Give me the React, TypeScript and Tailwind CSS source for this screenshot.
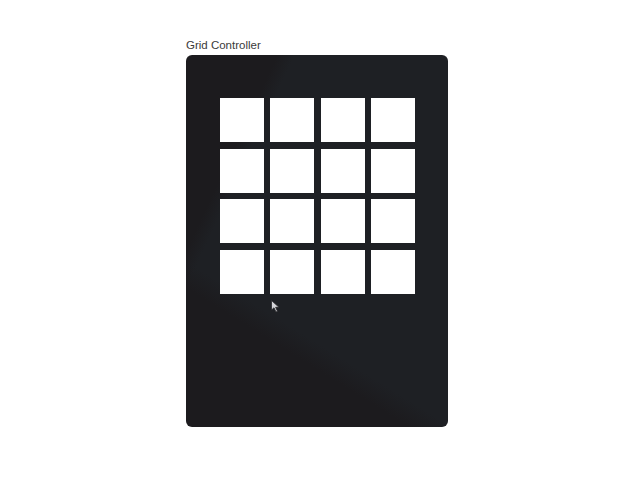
import React from 'react'

const cells = Array.from({ length: 16 }, (_, i) => i)

export default function App(): React.ReactElement {
  return (
    <div className="w-[640px] h-[480px] bg-white flex justify-start pl-[186px] pt-[38px]" style={{ fontFamily: '"Liberation Sans", Arial, sans-serif' }}>
      <div className="flex flex-col">
        <p className="text-[11.5px] leading-[14px] text-[#3a3a3a] mb-[3px]">Grid Controller</p>
        <div className="relative w-[262px] h-[372px] rounded-[6px] bg-[linear-gradient(115deg,#1c1b1e_0%,#1c1b1e_21%,transparent_25%),linear-gradient(32deg,#1c1b1e_0%,#1c1b1e_26%,#1e2024_31%,#1e2024_100%)] pt-[43px] pl-[34px]">
          <div className="grid grid-cols-[44px_44px_44px_44px] grid-rows-[44px_44px_44px_44px] gap-x-[6.3px] gap-y-[6.5px] w-fit">
            {cells.map(i => (
              <div key={i} className="bg-white" />
            ))}
          </div>
          <svg className="absolute left-[85px] top-[245px]" width="9" height="13" viewBox="0 0 9 13">
            <path d="M0.5 0.5 L0.5 10 L3 7.8 L5 12 L6.5 11.3 L4.6 7.3 L8 7.3 Z" fill="#d4d4d8" stroke="#27272a" strokeWidth="0.8" />
          </svg>
        </div>
      </div>
    </div>
  )
}
